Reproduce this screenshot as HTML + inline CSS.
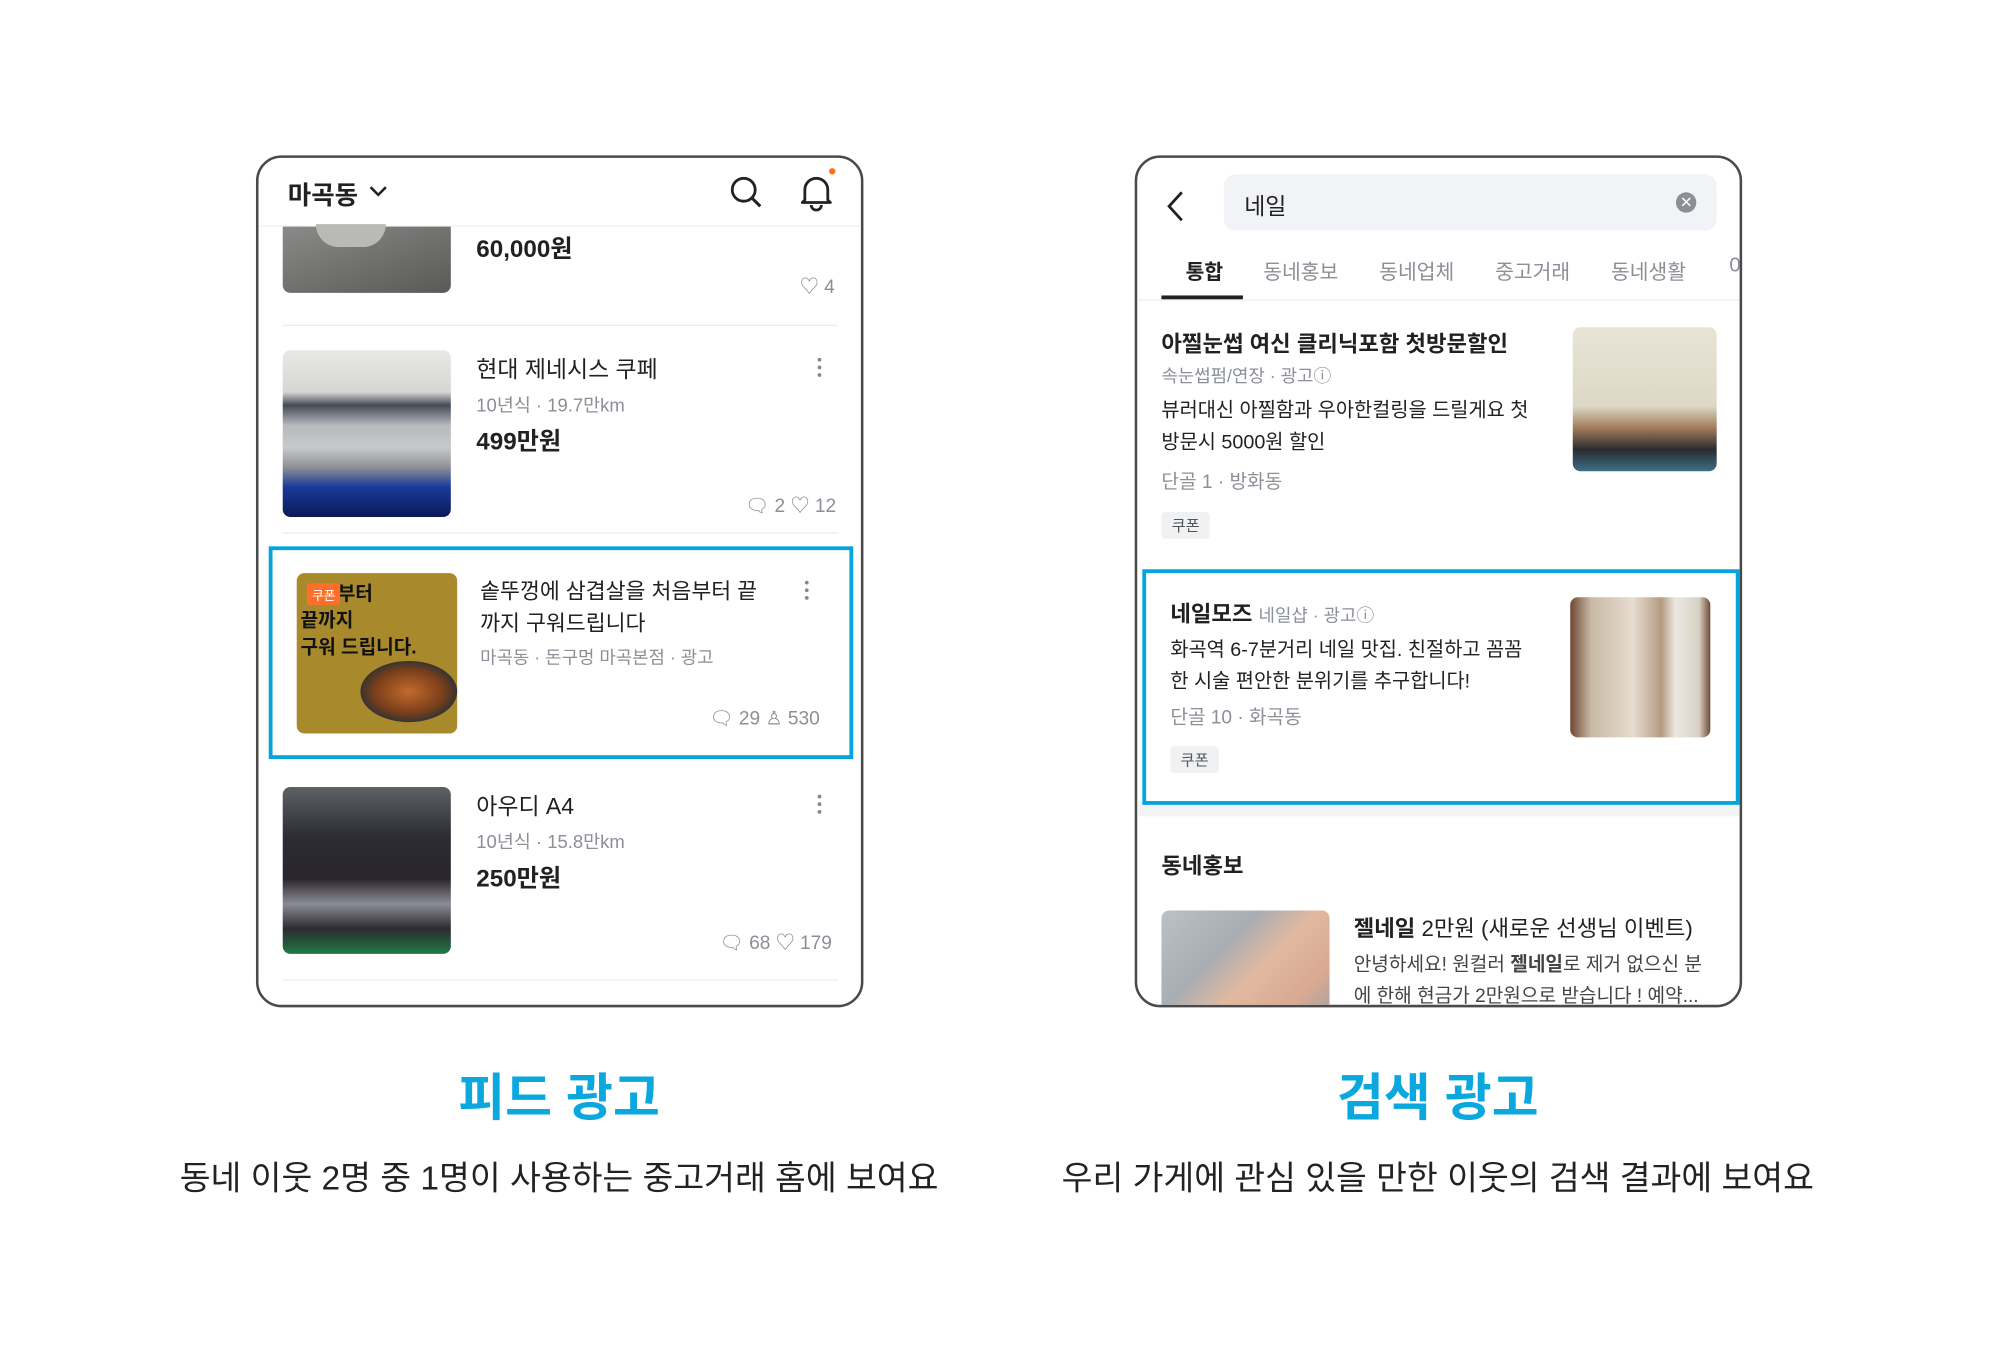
<!DOCTYPE html>
<html><head><meta charset="utf-8"><style>
*{margin:0;padding:0;box-sizing:border-box}
html,body{width:2000px;height:1349px;background:#fff;overflow:hidden}
body{font-family:"Liberation Sans","Noto Sans CJK KR",sans-serif;color:#212124}
#w{position:absolute;left:0;top:0;width:1570px;height:1060px;transform:scale(1.2735);transform-origin:0 0}
.a{position:absolute;white-space:nowrap}
.ph{position:absolute;top:122px;width:477px;height:669px;border:2.5px solid #4a4a4a;border-radius:20px;overflow:hidden;background:#fff}
.g{color:#8b8f96}
.b{font-weight:bold}
.sep{position:absolute;height:1px;background:#ececec}
.img{position:absolute;border-radius:6px;overflow:hidden}
.dots{position:absolute;width:4px}
.dots i{display:block;width:3px;height:3px;border-radius:50%;background:#888;margin-bottom:3px}
.tag{position:absolute;background:#f0f1f3;color:#555;font-size:12px;padding:2px 8px;border-radius:3px}
.hl{position:absolute;border:3px solid #06a4dc}
.tl{position:absolute;font-size:40px;font-weight:bold;color:#0aa8dc;transform:translateX(-50%);white-space:nowrap;top:830px}
.st{position:absolute;font-size:26.3px;color:#222;transform:translateX(-50%);white-space:nowrap;top:903px}
</style></head><body><div id="w">

<!-- LEFT PHONE -->
<div class="ph" style="left:201px">
 <div class="a b" style="left:23px;top:13px;font-size:20px">마곡동</div>
 <svg class="a" style="left:86px;top:20px" width="16" height="12" viewBox="0 0 16 12"><path d="M2 3l6 6 6-6" fill="none" stroke="#222" stroke-width="2"/></svg>
 <svg class="a" style="left:369px;top:13px" width="28" height="28" viewBox="0 0 28 28"><circle cx="12" cy="12" r="9" fill="none" stroke="#222" stroke-width="2.2"/><path d="M19 19l6 6" stroke="#222" stroke-width="2.4"/></svg>
 <svg class="a" style="left:424px;top:12px" width="28" height="30" viewBox="0 0 28 30"><path d="M5 21V13a9 9 0 0 1 18 0v8l2 2H3z" fill="none" stroke="#222" stroke-width="2.2" stroke-linejoin="round"/><path d="M10 25a4 4 0 0 0 8 0" fill="none" stroke="#222" stroke-width="2.2"/></svg>
 <div class="a" style="left:448px;top:8px;width:5px;height:5px;border-radius:50%;background:#ff6f0f"></div>
 <div class="sep" style="left:0;right:0;top:53px;background:#f0f0f0"></div>

 <div class="img" style="left:19px;top:54px;width:132px;height:52px;border-radius:0 0 6px 6px;background:linear-gradient(160deg,#8a8a88,#6c6d6b 60%,#595a58)"></div>
 <div class="a" style="left:45px;top:52px;width:55px;height:18px;border-radius:0 0 20px 20px;background:#b9bab8"></div>
 <div class="a b" style="left:171px;top:57px;font-size:19px">60,000원</div>
 <div class="a g" style="left:425px;top:90px;font-size:15px">♡ 4</div>
 <div class="sep" style="left:19px;width:436px;top:131px"></div>

 <div class="img" style="left:19px;top:151px;width:132px;height:131px;background:linear-gradient(180deg,#e8e8e6 0%,#d6d6d4 25%,#454a55 33%,#b7b9bd 45%,#c8c9cc 58%,#8f9297 70%,#1a3a9a 82%,#0b1a55 100%)"></div>
 <div class="a" style="left:171px;top:152px;font-size:18px">현대 제네시스 쿠페</div>
 <div class="a g" style="left:171px;top:183px;font-size:14.5px">10년식 · 19.7만km</div>
 <div class="a b" style="left:171px;top:208px;font-size:19px">499만원</div>
 <div class="a g" style="left:382px;top:262px;font-size:15px">🗨 2 ♡ 12</div>
 <div class="dots" style="left:439px;top:157px"><i></i><i></i><i></i></div>
 <div class="sep" style="left:19px;width:436px;top:294px"></div>

 <div class="hl" style="left:8px;top:305px;width:459px;height:167px"></div>
 <div class="img" style="left:30px;top:326px;width:126px;height:126px;background:#a8892c"></div>
 <div class="a b" style="left:33px;top:332px;font-size:15px;line-height:21px;color:#111">&nbsp;&nbsp;&nbsp;&nbsp;&nbsp;&nbsp;&nbsp;부터<br>끝까지<br>구워 드립니다.</div>
 <div class="a" style="left:38px;top:334px;background:#ff6f2a;color:#fff;font-size:10px;padding:1px 4px;border-radius:2px">쿠폰</div>
 <div class="a" style="left:80px;top:395px;width:76px;height:48px;border-radius:50%;background:radial-gradient(ellipse,#c36a2d 0%,#7a3f1a 50%,#333 72%)"></div>
 <div class="a" style="left:174px;top:328px;font-size:17px;line-height:25px">솥뚜껑에 삼겹살을 처음부터 끝<br>까지 구워드립니다</div>
 <div class="a g" style="left:174px;top:382px;font-size:14px">마곡동 · 돈구멍 마곡본점 · 광고</div>
 <div class="a g" style="left:354px;top:431px;font-size:15px">🗨 29 ♙ 530</div>
 <div class="dots" style="left:429px;top:332px"><i></i><i></i><i></i></div>

 <div class="img" style="left:19px;top:494px;width:132px;height:131px;background:linear-gradient(180deg,#5e6166 0%,#2c2c33 30%,#2a242c 55%,#8b8c95 70%,#2c2a30 85%,#1f7a44 100%)"></div>
 <div class="a" style="left:171px;top:495px;font-size:18px">아우디 A4</div>
 <div class="a g" style="left:171px;top:526px;font-size:14.5px">10년식 · 15.8만km</div>
 <div class="a b" style="left:171px;top:551px;font-size:19px">250만원</div>
 <div class="a g" style="left:362px;top:605px;font-size:15px">🗨 68 ♡ 179</div>
 <div class="dots" style="left:439px;top:500px"><i></i><i></i><i></i></div>
 <div class="sep" style="left:19px;width:436px;top:645px"></div>
</div>

<!-- RIGHT PHONE -->
<div class="ph" style="left:891px">
 <svg class="a" style="left:22px;top:25px" width="16" height="26" viewBox="0 0 16 26"><path d="M13 2L3 13l10 11" fill="none" stroke="#222" stroke-width="2.2"/></svg>
 <div class="a" style="left:68px;top:13px;width:387px;height:44px;background:#f2f3f6;border-radius:9px"></div>
 <div class="a" style="left:84px;top:24px;font-size:18px">네일</div>
 <div class="a" style="left:423px;top:27px;width:16px;height:16px;border-radius:50%;background:#8b8f96;color:#fff;font-size:12px;line-height:16px;text-align:center">✕</div>
 <div class="a b" style="left:38px;top:76px;font-size:16px">통합</div>
 <div class="a g" style="left:99px;top:76px;font-size:16px">동네홍보</div>
 <div class="a g" style="left:190px;top:76px;font-size:16px">동네업체</div>
 <div class="a g" style="left:281px;top:76px;font-size:16px">중고거래</div>
 <div class="a g" style="left:372px;top:76px;font-size:16px">동네생활</div>
 <div class="a g" style="left:465px;top:76px;font-size:16px">0</div>
 <div class="sep" style="left:0;right:0;top:111px"></div>
 <div class="a" style="left:19px;top:108px;width:64px;height:2.5px;background:#222"></div>

 <div class="a b" style="left:19px;top:133px;font-size:17.5px">아찔눈썹 여신 클리닉포함 첫방문할인</div>
 <div class="a g" style="left:19px;top:161px;font-size:14px">속눈썹펌/연장 · 광고ⓘ</div>
 <div class="a" style="left:19px;top:186px;font-size:15.5px;line-height:25px">뷰러대신 아찔함과 우아한컬링을 드릴게요 첫<br>방문시 5000원 할인</div>
 <div class="a g" style="left:19px;top:243px;font-size:15px">단골 1 · 방화동</div>
 <div class="tag" style="left:19px;top:278px">쿠폰</div>
 <div class="img" style="left:342px;top:133px;width:113px;height:113px;background:linear-gradient(180deg,#e9e5d6 0%,#dcd7c6 55%,#a27b5c 70%,#2b2b2e 85%,#3d6f86 100%)"></div>

 <div class="a" style="left:0;right:0;top:505px;height:12px;background:#f2f3f5"></div>
 <div class="hl" style="left:4px;top:323px;width:469px;height:185px;background:#fff"></div>
 <div class="a b" style="left:26px;top:345px;font-size:17.5px">네일모즈 <span class="g" style="font-weight:normal;font-size:14px">네일샵 · 광고ⓘ</span></div>
 <div class="a" style="left:26px;top:374px;font-size:15.5px;line-height:25px">화곡역 6-7분거리 네일 맛집. 친절하고 꼼꼼<br>한 시술 편안한 분위기를 추구합니다!</div>
 <div class="a g" style="left:26px;top:428px;font-size:15px">단골 10 · 화곡동</div>
 <div class="tag" style="left:26px;top:462px">쿠폰</div>
 <div class="img" style="left:340px;top:345px;width:110px;height:110px;background:linear-gradient(90deg,#6e4a33 0%,#c8b9a6 15%,#e6ddd0 45%,#b49a82 65%,#ece8e2 75%,#d8d0c4 92%,#6e4a33 100%)"></div>

 <div class="a b" style="left:19px;top:543px;font-size:17.5px">동네홍보</div>
 <div class="img" style="left:19px;top:591px;width:132px;height:90px;background:linear-gradient(135deg,#bcc1c6 0%,#a9aeb4 35%,#e1b9a1 55%,#d9a991 80%,#9aa0a8 100%)"></div>
 <div class="a" style="left:170px;top:592px;font-size:17.5px"><b>젤네일</b> 2만원 (새로운 선생님 이벤트)</div>
 <div class="a" style="left:170px;top:621px;font-size:15px;line-height:25px;color:#444">안녕하세요! 원컬러 <b>젤네일</b>로 제거 없으신 분<br>에 한해 현금가 2만원으로 받습니다 ! 예약...</div>
</div>

<div class="tl" style="left:439px">피드 광고</div>
<div class="tl" style="left:1129px">검색 광고</div>
<div class="st" style="left:439px">동네 이웃 2명 중 1명이 사용하는 중고거래 홈에 보여요</div>
<div class="st" style="left:1129px">우리 가게에 관심 있을 만한 이웃의 검색 결과에 보여요</div>
</div></body></html>
